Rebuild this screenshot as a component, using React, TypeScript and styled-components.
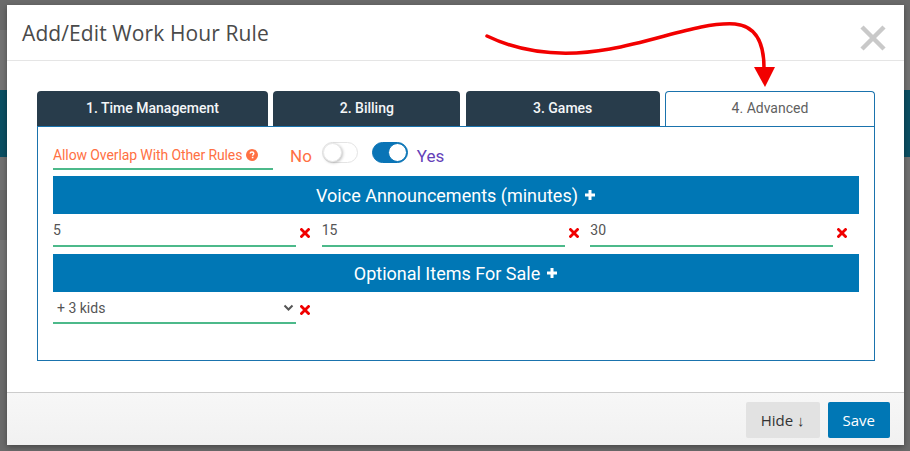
import React from "react";
import styled, { createGlobalStyle } from "styled-components";

const Global = createGlobalStyle`
  html, body { margin: 0; padding: 0; }
  body {
    width: 910px;
    height: 451px;
    overflow: hidden;
    font-family: Roboto, "Liberation Sans", Arial, sans-serif;
    background:
      linear-gradient(to bottom,
        #6b6b6b 0px, #6b6b6b 30px,
        #737373 30px, #737373 90px,
        #0b4f63 90px, #0b4f63 157px,
        #717171 157px, #717171 190px,
        #6b6b6b 190px, #6b6b6b 240px,
        #747474 240px, #747474 290px,
        #6b6b6b 290px);
  }
`;

const Page = styled.div`
  position: relative;
  width: 910px;
  height: 451px;
  padding: 5px 6px 0 7px;
  box-sizing: border-box;
`;

const Modal = styled.div`
  width: 897px;
  height: 440px;
  background: #fff;
  display: flex;
  flex-direction: column;
  box-shadow: 0 2px 6px rgba(0, 0, 0, 0.35);
`;

const Header = styled.div`
  height: 55px;
  border-bottom: 1px solid #e5e5e5;
  display: flex;
  align-items: center;
  justify-content: space-between;
  padding: 0 17px 0 15px;
`;

const Title = styled.h4`
  margin: 0;
  font-family: "Open Sans", "Liberation Sans", sans-serif;
  font-weight: 400;
  font-size: 21px;
  color: #4a4a4a;
  letter-spacing: 0.1px;
  padding-top: 1px;
`;

const CloseButton = styled.button`
  border: 0;
  background: transparent;
  padding: 0;
  width: 28px;
  height: 28px;
  margin-top: 10px;
  display: flex;
  align-items: center;
  justify-content: center;
  cursor: pointer;
`;

const Body = styled.div`
  flex: 1;
  padding: 30px 29px 31px 30px;
  display: flex;
  flex-direction: column;
`;

const Tabs = styled.div`
  display: flex;
  justify-content: space-between;
  height: 35px;
`;

const Tab = styled.div<{ $w: number; $active?: boolean }>`
  width: ${(p) => p.$w}px;
  flex: none;
  box-sizing: border-box;
  border-radius: 4px 4px 0 0;
  display: flex;
  align-items: center;
  justify-content: center;
  font-size: 14px;
  font-weight: ${(p) => (p.$active ? 400 : 500)};
  color: ${(p) => (p.$active ? "#5f5f5f" : "#f4f6f8")};
  background: ${(p) => (p.$active ? "#ffffff" : "#283c4b")};
  border: ${(p) => (p.$active ? "1px solid #1a73ad" : "none")};
  border-bottom: none;
  padding-bottom: 2px;
`;

const Panel = styled.div`
  height: 235px;
  box-sizing: border-box;
  border: 1px solid #1a73ad;
  padding: 14px 15px 0 15px;
  display: flex;
  flex-direction: column;
`;

const OptionRow = styled.div`
  height: 30px;
  display: flex;
  align-items: flex-start;
  margin-bottom: 5px;
`;

const OverlapLabel = styled.div`
  width: 220px;
  height: 29px;
  box-sizing: border-box;
  border-bottom: 2px solid #4cb98a;
  color: #ff7043;
  font-size: 14px;
  display: flex;
  align-items: center;
  gap: 4px;
  letter-spacing: -0.1px;
  white-space: nowrap;
`;

const ChoiceText = styled.span<{ $color: string; $ml: number }>`
  font-size: 17px;
  color: ${(p) => p.$color};
  line-height: 30px;
  margin-left: ${(p) => p.$ml}px;
`;

const Switch = styled.div<{ $on?: boolean; $ml: number }>`
  position: relative;
  flex: none;
  width: 36px;
  height: 21px;
  box-sizing: border-box;
  border-radius: 11px;
  margin-left: ${(p) => p.$ml}px;
  background: ${(p) => (p.$on ? "#0a74b6" : "#ffffff")};
  border: 1px solid ${(p) => (p.$on ? "#0a74b6" : "#e4e4e4")};
  margin-top: 1px;
  &::after {
    content: "";
    position: absolute;
    top: 0px;
    ${(p) => (p.$on ? "right: 0px;" : "left: 0px;")}
    width: 19px;
    height: 19px;
    border-radius: 50%;
    background: #fff;
    box-sizing: border-box;
    border: ${(p) => (p.$on ? "1px solid #0a74b6" : "1px solid #e8e8e8")};
    box-shadow: ${(p) => (p.$on ? "none" : "1px 1px 3px rgba(0,0,0,0.25)")};
  }
`;

const Bar = styled.div`
  height: 38px;
  background: #0077b5;
  color: #fff;
  font-size: 18px;
  display: flex;
  align-items: center;
  justify-content: center;
  gap: 6px;
  flex: none;
`;

const InputGrid = styled.div`
  display: grid;
  grid-template-columns: repeat(3, 1fr);
  height: 27px;
  margin: 6px 0 7px 0;
`;

const Cell = styled.div`
  display: flex;
  align-items: flex-end;
`;

const Field = styled.div`
  width: 243px;
  flex: none;
  height: 27px;
  box-sizing: border-box;
  border-bottom: 2px solid #4cb98a;
  font-size: 14px;
  color: #555;
  display: flex;
  align-items: flex-start;
  padding-top: 2px;
  justify-content: space-between;
`;

const SelectField = styled(Field)`
  height: 28px;
  padding: 2px 2px 4px 4px;
  align-items: center;
`;

const RemoveIcon = styled.span`
  height: 20px;
  display: flex;
  align-items: center;
  padding-left: 4px;
  margin-bottom: 4px;
`;

const SelectRow = styled.div`
  display: flex;
  align-items: flex-end;
  margin-top: 4px;
`;

const Footer = styled.div`
  height: 53px;
  box-sizing: border-box;
  border-top: 1px solid #cccccc;
  background: linear-gradient(to bottom, #f7f7f7, #f1f1f1);
  display: flex;
  align-items: center;
  justify-content: flex-end;
  gap: 8px;
  padding: 0 14px 0 0;
`;

const Button = styled.button<{ $primary?: boolean }>`
  height: 36px;
  border: 0;
  border-radius: 2px;
  padding: 0 15px;
  font-family: "Open Sans", "Liberation Sans", sans-serif;
  font-size: 15px;
  color: ${(p) => (p.$primary ? "#fff" : "#333")};
  background: ${(p) => (p.$primary ? "#0077b5" : "#e2e2e2")};
  margin-top: 1px;
`;

const Overlay = styled.svg`
  position: absolute;
  left: 0;
  top: 0;
  pointer-events: none;
`;

const Cross = () => (
  <svg width="10" height="10" viewBox="0 0 10 10">
    <path d="M1.5 1.5 L8.5 8.5 M8.5 1.5 L1.5 8.5" stroke="#f00000" strokeWidth="2.8" strokeLinecap="square" />
  </svg>
);

const Help = () => (
  <svg width="12" height="12" viewBox="0 0 12 12">
    <circle cx="6" cy="6" r="6" fill="#ff7043" />
    <path d="M4.2 4.6 C4.2 3.5 5 3 6 3 C7 3 7.8 3.6 7.8 4.5 C7.8 5.5 6.6 5.6 6.6 6.7" stroke="#fff" strokeWidth="1.5" fill="none" />
    <rect x="5.8" y="7.8" width="1.6" height="1.5" fill="#fff" />
  </svg>
);

const Plus = () => (
  <svg width="12" height="12" viewBox="0 0 12 12">
    <path d="M6 1 V11 M1 6 H11" stroke="#fff" strokeWidth="3" />
  </svg>
);

const Chevron = () => (
  <svg width="11" height="8" viewBox="0 0 11 8">
    <path d="M1.5 1.5 L5.5 5.5 L9.5 1.5" stroke="#555" strokeWidth="2" fill="none" />
  </svg>
);

export default function App() {
  return (
    <>
      <Global />
      <Page>
        <Modal>
          <Header>
            <Title>Add/Edit Work Hour Rule</Title>
            <CloseButton aria-label="close">
              <svg width="26" height="26" viewBox="0 0 26 26">
                <path d="M2 2 L24 24 M24 2 L2 24" stroke="#c9c9c9" strokeWidth="4.5" />
              </svg>
            </CloseButton>
          </Header>
          <Body>
            <Tabs>
              <Tab $w={231}>1. Time Management</Tab>
              <Tab $w={187}>2. Billing</Tab>
              <Tab $w={194}>3. Games</Tab>
              <Tab $w={210} $active>4. Advanced</Tab>
            </Tabs>
            <Panel>
              <OptionRow>
                <OverlapLabel>
                  Allow Overlap With Other Rules <Help />
                </OverlapLabel>
                <ChoiceText $color="#ff7043" $ml={17}>No</ChoiceText>
                <Switch $ml={10} />
                <Switch $on $ml={14} />
                <ChoiceText $color="#6440b8" $ml={9}>Yes</ChoiceText>
              </OptionRow>
              <Bar>
                Voice Announcements (minutes) <Plus />
              </Bar>
              <InputGrid>
                {["5", "15", "30"].map((v) => (
                  <Cell key={v}>
                    <Field>{v}</Field>
                    <RemoveIcon>
                      <Cross />
                    </RemoveIcon>
                  </Cell>
                ))}
              </InputGrid>
              <Bar>
                Optional Items For Sale <Plus />
              </Bar>
              <SelectRow>
                <SelectField>
                  <span>+ 3 kids</span>
                  <Chevron />
                </SelectField>
                <RemoveIcon>
                  <Cross />
                </RemoveIcon>
              </SelectRow>
            </Panel>
          </Body>
          <Footer>
            <Button>Hide ↓</Button>
            <Button $primary>Save</Button>
          </Footer>
        </Modal>
        <Overlay width="910" height="451" viewBox="0 0 910 451">
          <path
            d="M487 36 C520 52 560 58 610 49 C660 40 700 22 735 24 C757 26 764 44 764 68"
            stroke="#f20000"
            strokeWidth="3.5"
            fill="none"
            strokeLinecap="round"
          />
          <polygon points="754,67 775,67 765,87" fill="#f20000" />
        </Overlay>
      </Page>
    </>
  );
}
